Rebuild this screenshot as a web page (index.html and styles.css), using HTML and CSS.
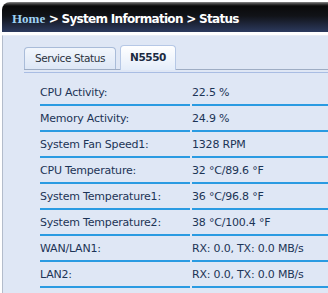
FILE: index.html
```html
<!DOCTYPE html>
<html lang="en">
<head>
<meta charset="UTF-8">
<title>System Information - Status</title>
<link rel="stylesheet" href="styles.css">
</head>
<body>
    <div class="header">
        <span class="home">Home</span><span class="path"> &gt; System Information &gt; Status</span>
    </div>
    <div class="panel">
        <div class="tabs">
            <div class="tab">Service Status</div>
            <div class="tab active">N5550</div>
        </div>
        <div class="tabline"></div>
        <div class="info">
            <div class="label">CPU Activity:</div><div class="value">22.5 %</div>
            <div class="label">Memory Activity:</div><div class="value">24.9 %</div>
            <div class="label">System Fan Speed1:</div><div class="value">1328 RPM</div>
            <div class="label">CPU Temperature:</div><div class="value">32 &deg;C/89.6 &deg;F</div>
            <div class="label">System Temperature1:</div><div class="value">36 &deg;C/96.8 &deg;F</div>
            <div class="label">System Temperature2:</div><div class="value">38 &deg;C/100.4 &deg;F</div>
            <div class="label">WAN/LAN1:</div><div class="value">RX: 0.0, TX: 0.0 MB/s</div>
            <div class="label">LAN2:</div><div class="value">RX: 0.0, TX: 0.0 MB/s</div>
        </div>
    </div>
</body>
</html>
```

FILE: styles.css
```css
* {
    margin: 0;
    padding: 0;
    box-sizing: border-box;
}
body {
    background-color: #ffffff;
    font-family: "DejaVu Sans", Verdana, sans-serif;
    overflow: hidden;
}
.header {
    margin: 2px 0 0 2px;
    width: 340px;
    height: 30px;
    border-radius: 8px 0 0 0;
    background: linear-gradient(#8a8a8a 0px, #3a3a3a 2px, #0a0a0a 4px, #111318 14px, #2c3a5e 30px);
    padding: 6px 0 0 10px;
    white-space: nowrap;
}
.home {
    font-family: "Liberation Serif", serif;
    font-weight: bold;
    font-size: 13px;
    color: #9fd2f2;
}
.path {
    font-family: "DejaVu Sans", sans-serif;
    font-weight: bold;
    font-size: 12px;
    letter-spacing: -0.7px;
    color: #ffffff;
}
.panel {
    margin: 3px 0 0 2px;
    width: 340px;
    height: 270px;
    background-color: #dfe7f5;
    border-left: 1px solid #b3bccb;
    border-top: 1px solid #e8edf6;
    padding: 9px 0 0 21px;
}
.tabs {
    display: flex;
    align-items: flex-end;
    gap: 4px;
    border-bottom: 1px solid #9eadc4;
    height: 25px;
}
.tab {
    font-size: 10.5px;
    letter-spacing: -0.4px;
    color: #2b3340;
    height: 22px;
    padding: 4px 10px 0 10px;
    border: 1px solid #a9bcd9;
    border-bottom: none;
    border-radius: 4px 4px 0 0;
    background: linear-gradient(#f2f6fc, #dde7f6);
}
.tab.active {
    font-weight: bold;
    color: #1b2a40;
    height: 25px;
    margin-bottom: -1px;
    padding: 5px 9px 0 9px;
    background: linear-gradient(#ffffff, #e4edfa);
    border-color: #b6c8e6;
}
.tabline {
    height: 1px;
    margin-top: 2px;
    background-color: #a9bde3;
}
.info {
    display: grid;
    grid-template-columns: 150px 150px;
    column-gap: 2px;
    margin: 7px 0 0 16px;
}
.label, .value {
    height: 26px;
    line-height: 25px;
    font-size: 11px;
    letter-spacing: -0.2px;
    color: #1c3456;
    border-bottom: 2px solid #2a9be2;
    white-space: nowrap;
}
```
